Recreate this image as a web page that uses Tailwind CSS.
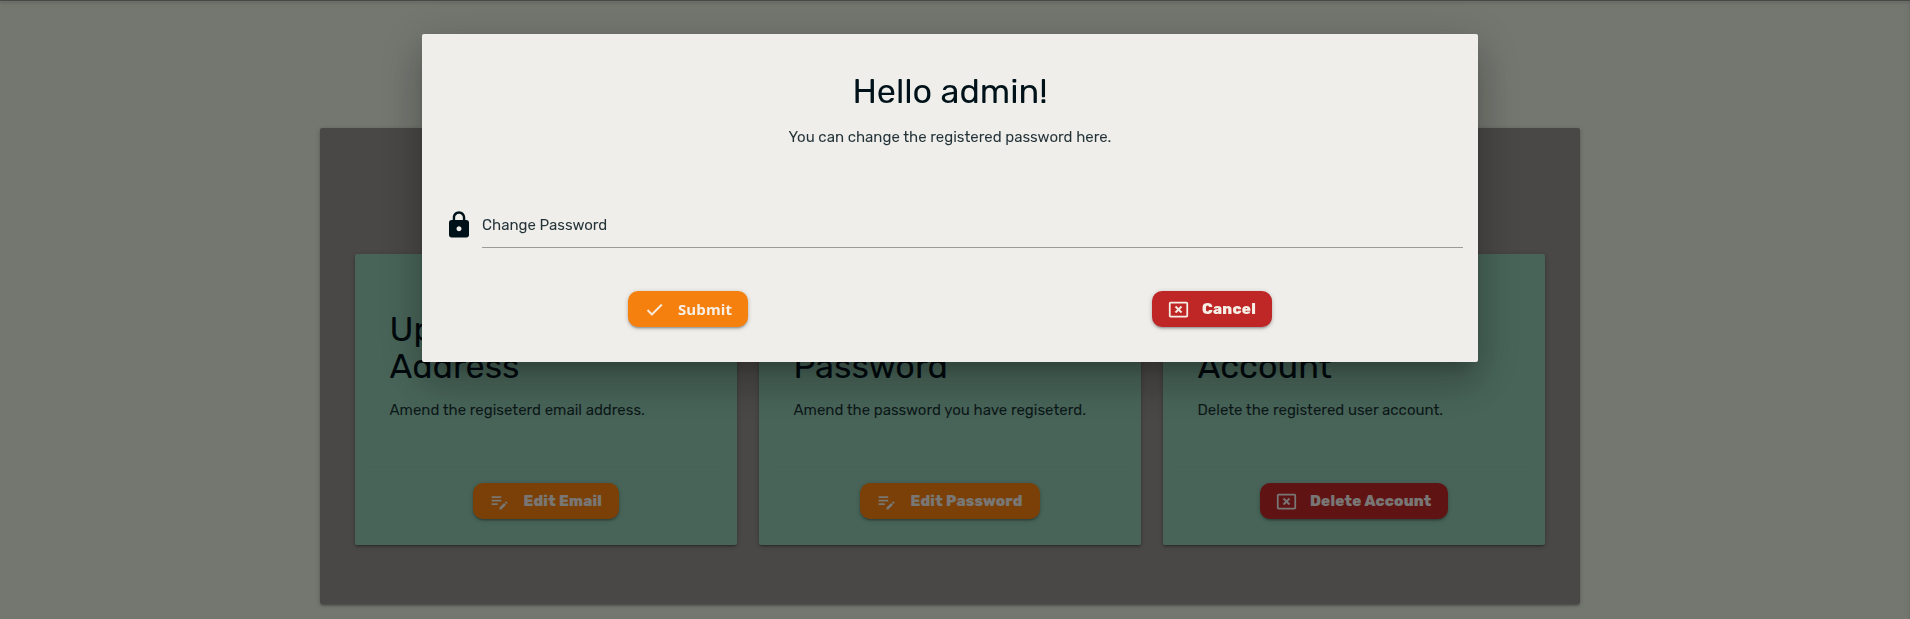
<!DOCTYPE html>
<html lang="en">
<head>
<meta charset="utf-8">
<title>User settings</title>
<script src="https://cdn.jsdelivr.net/npm/@tailwindcss/browser@4"></script>
</head>
<body class="relative h-[619px] overflow-hidden bg-[#e8eee0] font-['Rubik','Inter',sans-serif] text-[15px] leading-[22.5px] font-normal text-[#001219]">
<svg class="hidden">
  <symbol id="edit-note" viewBox="0 0 24 24"><path d="M3 10h11v2H3v-2zm0-2h11V6H3v2zm0 8h7v-2H3v2zm15.01-3.13.71-.71c.39-.39 1.02-.39 1.41 0l.71.71c.39.39.39 1.02 0 1.41l-.71.71-2.12-2.12zm-.71.71-5.3 5.3V21h2.12l5.3-5.3-2.12-2.12z"/></symbol>
  <symbol id="cancel-box" viewBox="0 0 24 24"><path d="M21 19.1H3V5h18v14.1zM21 3H3c-1.1 0-2 .9-2 2v14c0 1.1.9 2 2 2h18c1.1 0 2-.9 2-2V5c0-1.1-.9-2-2-2z"/><path stroke="currentColor" stroke-width=".5" d="M14.59 8 12 10.59 9.41 8 8 9.41 10.59 12 8 14.59 9.41 16 12 13.41 14.59 16 16 14.59 13.41 12 16 9.41z"/></symbol>
  <symbol id="check" viewBox="0 0 24 24"><path stroke="currentColor" stroke-width=".3" d="M9 16.17 4.83 12l-1.42 1.41L9 19 21 7l-1.41-1.41z"/></symbol>
  <symbol id="lock" viewBox="0 0 24 24"><path d="M18 8h-1V6c0-2.76-2.24-5-5-5S7 3.24 7 6v2H6c-1.1 0-2 .9-2 2v10c0 1.1.9 2 2 2h12c1.1 0 2-.9 2-2V10c0-1.1-.9-2-2-2zm-6 9c-1.1 0-2-.9-2-2s.9-2 2-2 2 .9 2 2-.9 2-2 2zm3.1-9H8.9V6c0-1.71 1.39-3.1 3.1-3.1s3.1 1.39 3.1 3.1v2z"/></symbol>
</svg>

<nav class="h-px bg-[#94908c] shadow-[0_2px_2px_0_rgba(0,0,0,.14),0_3px_1px_-2px_rgba(0,0,0,.12),0_1px_5px_0_rgba(0,0,0,.2)]"></nav>
<aside class="absolute left-full top-0 h-full w-px shadow-[0_2px_2px_0_rgba(0,0,0,.14),0_3px_1px_-2px_rgba(0,0,0,.12),0_1px_5px_0_rgba(0,0,0,.2)]"></aside>

<div class="pr-[10px] pt-[127px]">
<main class="mx-auto h-[476px] w-[1260px] rounded-[2px] bg-[#94908c] px-[35px] pt-[126px] shadow-[0_2px_2px_0_rgba(0,0,0,.14),0_3px_1px_-2px_rgba(0,0,0,.12),0_1px_5px_0_rgba(0,0,0,.2)]">
  <div class="flex gap-[22px]">
    <section class="flex h-[291px] w-[382px] flex-col rounded-[2px] bg-[#90c8b0] pt-[57px] shadow-[0_2px_2px_0_rgba(0,0,0,.14),0_3px_1px_-2px_rgba(0,0,0,.12),0_1px_5px_0_rgba(0,0,0,.2)]">
      <h4 class="ml-[34.5px] text-[34.2px] leading-[37px]">Update Email<br>Address</h4>
      <p class="ml-[34.5px] mt-[14px] text-[#001219]/85">Amend the regiseterd email address.</p>
      <hr class="mx-[10px] mt-[44.5px] border-[#8cc3ac]">
      <button class="mx-auto mt-4 flex h-9 w-[146px] items-center gap-[14px] rounded-[10px] bg-[#f5800e] pl-[15.5px] text-[15px] font-extrabold tracking-[0.2px] whitespace-nowrap text-[#f0eeea] shadow-[0_2px_2px_0_rgba(0,0,0,.14),0_3px_1px_-2px_rgba(0,0,0,.12),0_1px_5px_0_rgba(0,0,0,.2)]"><svg class="size-[21px] shrink-0 fill-current"><use href="#edit-note"/></svg>Edit Email</button>
    </section>
    <section class="flex h-[291px] w-[382px] flex-col rounded-[2px] bg-[#90c8b0] pt-[57px] shadow-[0_2px_2px_0_rgba(0,0,0,.14),0_3px_1px_-2px_rgba(0,0,0,.12),0_1px_5px_0_rgba(0,0,0,.2)]">
      <h4 class="ml-[34.5px] text-[34.2px] leading-[37px]">Update<br>Password</h4>
      <p class="ml-[34.5px] mt-[14px] text-[#001219]/85">Amend the password you have regiseterd.</p>
      <hr class="mx-[10px] mt-[44.5px] border-[#8cc3ac]">
      <button class="mx-auto mt-4 flex h-9 w-[180px] items-center gap-[14px] rounded-[10px] bg-[#f5800e] pl-[15.5px] text-[15px] font-extrabold tracking-[0.2px] whitespace-nowrap text-[#f0eeea] shadow-[0_2px_2px_0_rgba(0,0,0,.14),0_3px_1px_-2px_rgba(0,0,0,.12),0_1px_5px_0_rgba(0,0,0,.2)]"><svg class="size-[21px] shrink-0 fill-current"><use href="#edit-note"/></svg>Edit Password</button>
    </section>
    <section class="flex h-[291px] w-[382px] flex-col rounded-[2px] bg-[#90c8b0] pt-[57px] shadow-[0_2px_2px_0_rgba(0,0,0,.14),0_3px_1px_-2px_rgba(0,0,0,.12),0_1px_5px_0_rgba(0,0,0,.2)]">
      <h4 class="ml-[34.5px] text-[34.2px] leading-[37px]">Delete<br>Account</h4>
      <p class="ml-[34.5px] mt-[14px] text-[#001219]/85">Delete the registered user account.</p>
      <hr class="mx-[10px] mt-[44.5px] border-[#8cc3ac]">
      <button class="mx-auto mt-4 flex h-9 w-[188px] items-center gap-[13.5px] rounded-[10px] bg-[#bf2626] pl-[15.5px] text-[15px] font-extrabold tracking-[0.2px] whitespace-nowrap text-[#f0eeea] shadow-[0_2px_2px_0_rgba(0,0,0,.14),0_3px_1px_-2px_rgba(0,0,0,.12),0_1px_5px_0_rgba(0,0,0,.2)]"><svg class="size-[21px] shrink-0 fill-current"><use href="#cancel-box"/></svg>Delete Account</button>
    </section>
  </div>
</main>
</div>

<div class="fixed inset-0 bg-black/50 pr-[10px] pt-[34px]">
  <div class="mx-auto h-[328px] w-[1056px] rounded-[2px] bg-[#efeeea] pt-[39px] shadow-[0_24px_38px_3px_rgba(0,0,0,.14),0_9px_46px_8px_rgba(0,0,0,.12),0_11px_15px_-7px_rgba(0,0,0,.2)]">
    <h4 class="text-center text-[34.2px] leading-[37px]">Hello admin!</h4>
    <p class="mt-4 text-center text-[#001219]/85">You can change the registered password here.</p>
    <div class="mt-[52.5px] flex h-[47px] items-stretch gap-2 pl-[22px] pr-[15px]">
      <svg class="size-[30px] shrink-0 self-center fill-current"><use href="#lock"/></svg>
      <label class="flex flex-1 items-center border-b border-[#9b9b98] pt-[2px] text-[#001219]/85">Change Password</label>
    </div>
    <div class="mt-[43px] flex">
      <div class="flex w-[532px] justify-center"><button class="flex h-9 w-[120px] items-center gap-[13.5px] rounded-[10px] bg-[#f5800e] pl-[15.5px] font-['Open_Sans',sans-serif] text-[15px] font-bold tracking-[0.1px] text-[#f6efe6] shadow-[0_2px_2px_0_rgba(0,0,0,.14),0_3px_1px_-2px_rgba(0,0,0,.12),0_1px_5px_0_rgba(0,0,0,.2)]"><svg class="size-[21px] shrink-0 fill-current"><use href="#check"/></svg>Submit</button></div>
      <div class="flex w-[516px] justify-center"><button class="flex h-9 w-[120px] items-center gap-[13.5px] rounded-[10px] bg-[#bf2626] pl-[15.5px] text-[15px] font-extrabold tracking-[0.25px] text-[#f6efe6] shadow-[0_2px_2px_0_rgba(0,0,0,.14),0_3px_1px_-2px_rgba(0,0,0,.12),0_1px_5px_0_rgba(0,0,0,.2)]"><svg class="size-[21px] shrink-0 fill-current"><use href="#cancel-box"/></svg>Cancel</button></div>
    </div>
  </div>
</div>
</body>
</html>
